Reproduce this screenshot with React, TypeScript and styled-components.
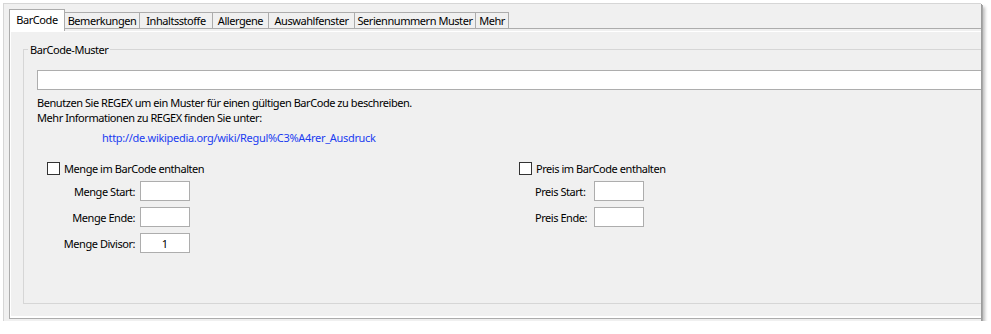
import React from "react";
import styled, { createGlobalStyle } from "styled-components";

const GlobalStyle = createGlobalStyle`
  html, body {
    margin: 0;
    padding: 0;
    background: #ffffff;
  }
  body {
    font-family: "Segoe UI", "Noto Sans", sans-serif;
    font-size: 11px;
    letter-spacing: -0.45px;
    color: #000;
  }
`;

const tabs = [
  { label: "BarCode", width: 56 },
  { label: "Bemerkungen", width: 76 },
  { label: "Inhaltsstoffe", width: 74 },
  { label: "Allergene", width: 57 },
  { label: "Auswahlfenster", width: 87 },
  { label: "Seriennummern Muster", width: 122 },
  { label: "Mehr", width: 34 },
];

const App = () => {
  return (
    <>
      <GlobalStyle />
      <Window>
        <TabBar>
          {tabs.map((t, i) => (
            <Tab key={t.label} $active={i === 0} $width={t.width} $first={i === 0}>
              {t.label}
            </Tab>
          ))}
        </TabBar>
        <Panel>
          <Page>
            <GroupBox>
              <Legend>BarCode-Muster</Legend>
              <PatternInput type="text" />
              <HelpText>
                Benutzen Sie REGEX um ein Muster für einen gültigen BarCode zu beschreiben.
                <br />
                Mehr Informationen zu REGEX finden Sie unter:
              </HelpText>
              <Link href="#">http://de.wikipedia.org/wiki/Regul%C3%A4rer_Ausdruck</Link>
              <Columns>
                <Column>
                  <CheckRow>
                    <CheckBox />
                    <span>Menge im BarCode enthalten</span>
                  </CheckRow>
                  <FieldGrid $labelWidth={88} $align="right">
                    <FieldLabel>Menge Start:</FieldLabel>
                    <SmallInput />
                    <FieldLabel>Menge Ende:</FieldLabel>
                    <SmallInput />
                    <FieldLabel>Menge Divisor:</FieldLabel>
                    <SmallInput defaultValue="1" />
                  </FieldGrid>
                </Column>
                <Column>
                  <CheckRow>
                    <CheckBox />
                    <span>Preis im BarCode enthalten</span>
                  </CheckRow>
                  <FieldGrid $labelWidth={54} $align="left" $indent={16}>
                    <FieldLabel>Preis Start:</FieldLabel>
                    <SmallInput />
                    <FieldLabel>Preis Ende:</FieldLabel>
                    <SmallInput />
                  </FieldGrid>
                </Column>
              </Columns>
            </GroupBox>
          </Page>
        </Panel>
      </Window>
    </>
  );
};

const Window = styled.div`
  margin: 3px 0 0 3px;
  width: 978px;
  height: 318px;
  box-sizing: border-box;
  background: #f0f0f0;
  border-left: 1px solid #d6d6d6;
  border-top: 1px solid #d6d6d6;
  box-shadow: 1px 1px 0 #9c9c9c, 2px 2px 0 #a8a8a8, 4px 4px 3px rgba(0, 0, 0, 0.25);
  padding: 5px 0 0 5px;
  overflow: hidden;
`;

const TabBar = styled.div`
  display: flex;
  align-items: flex-end;
  height: 20px;
  position: relative;
  z-index: 2;
`;

const Tab = styled.div<{ $active: boolean; $width: number; $first: boolean }>`
  box-sizing: border-box;
  width: ${({ $width }) => $width}px;
  height: ${({ $active }) => ($active ? 22 : 17)}px;
  margin-left: ${({ $first }) => ($first ? 0 : -1)}px;
  margin-bottom: ${({ $active }) => ($active ? -2 : 0)}px;
  border: 1px solid #acacac;
  border-bottom: ${({ $active }) => ($active ? "none" : "1px solid #acacac")};
  background: ${({ $active }) => ($active ? "#ffffff" : "#f0f0f0")};
  position: relative;
  z-index: ${({ $active }) => ($active ? 3 : 1)};
  display: flex;
  align-items: ${({ $active }) => ($active ? "flex-start" : "center")};
  justify-content: center;
  padding-top: ${({ $active }) => ($active ? 2 : 0)}px;
  white-space: nowrap;
  line-height: 15px;
`;

const Panel = styled.div`
  box-sizing: border-box;
  height: 291px;
  width: 1100px;
  border: 1px solid #acacac;
  border-right: none;
  padding-top: 2px;
  margin-top: -1px;
`;

const Page = styled.div`
  box-sizing: border-box;
  height: 100%;
  box-shadow: inset 0 1px 0 #ffffff, inset 1px 0 0 #ffffff, inset 0 -2px 0 #ffffff;
  padding: 11px 0 0 13px;
`;

const GroupBox = styled.fieldset`
  box-sizing: border-box;
  margin: 0;
  width: 1060px;
  height: 262px;
  border: 1px solid #d6d6d6;
  padding: 0 0 0 13px;
  min-width: 0;
`;

const Legend = styled.legend`
  padding: 0 2px;
  margin-left: -9px;
  line-height: 15px;
`;

const PatternInput = styled.input`
  display: block;
  box-sizing: border-box;
  width: 1000px;
  height: 20px;
  margin: 13px 0 0 0;
  border: 1px solid #adadad;
  background: #fff;
  padding: 0 3px;
  font: inherit;
  outline: none;
`;

const HelpText = styled.div`
  margin-top: 5px;
  line-height: 15px;
`;

const Link = styled.a`
  display: block;
  margin: 5px 0 0 65px;
  line-height: 15px;
  letter-spacing: -0.3px;
  color: #1a3cf0;
  text-decoration: none;
  width: max-content;
`;

const Columns = styled.div`
  display: grid;
  grid-template-columns: 472px 300px;
  margin: 16px 0 0 10px;
`;

const Column = styled.div`
  display: flex;
  flex-direction: column;
`;

const CheckRow = styled.label`
  display: flex;
  align-items: center;
  gap: 4px;
  height: 15px;
  line-height: 15px;
`;

const CheckBox = styled.span`
  box-sizing: border-box;
  width: 13px;
  height: 13px;
  border: 1px solid #333333;
  background: #ffffff;
`;

const FieldGrid = styled.div<{ $labelWidth: number; $align: string; $indent?: number }>`
  display: grid;
  grid-template-columns: ${({ $labelWidth }) => $labelWidth}px 50px;
  column-gap: 5px;
  row-gap: 6px;
  align-items: center;
  margin: 5px 0 0 ${({ $indent }) => $indent ?? 0}px;
  text-align: ${({ $align }) => $align};
`;

const FieldLabel = styled.span`
  line-height: 15px;
  white-space: nowrap;
`;

const SmallInput = styled.input`
  box-sizing: border-box;
  width: 50px;
  height: 20px;
  border: 1px solid #adadad;
  background: #fff;
  font: inherit;
  text-align: center;
  padding: 0;
  outline: none;
`;

export default App;
